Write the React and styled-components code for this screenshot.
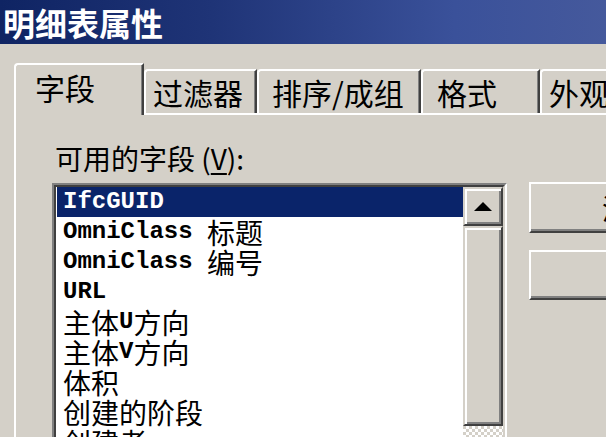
import React from 'react';
import styled, { createGlobalStyle } from 'styled-components';

const GlobalStyle = createGlobalStyle`
  html, body {
    margin: 0;
    padding: 0;
    background: #d4d0c8;
    overflow: hidden;
  }
  body {
    font-family: 'Noto Sans CJK SC', 'Liberation Sans', sans-serif;
  }
`;

const Window = styled.div`
  width: 606px;
  height: 437px;
  overflow: hidden;
  display: flex;
  flex-direction: column;
  background: #d4d0c8;
  color: #000;
`;

const TitleBar = styled.div`
  height: 44px;
  flex: none;
  display: flex;
  align-items: center;
  padding-left: 3px;
  background: linear-gradient(90deg, #0f2463 0%, #1f3477 35%, #3a519a 75%, #45599c 100%);
  color: #fff;
  font-size: 32px;
  font-weight: 700;
  white-space: nowrap;
`;

const Body = styled.div`
  flex: 1;
  display: flex;
  flex-direction: column;
  padding: 19px 0 0 14px;
  min-height: 0;
`;

const TabStrip = styled.div`
  display: flex;
  align-items: flex-end;
  height: 50px;
  flex: none;
`;

const Tab = styled.div`
  flex: none;
  box-sizing: border-box;
  width: ${p => p.$w}px;
  height: ${p => (p.$active ? 52 : 44)}px;
  margin-bottom: ${p => (p.$active ? -2 : 0)}px;
  position: relative;
  z-index: ${p => (p.$active ? 1 : 0)};
  display: flex;
  align-items: center;
  padding-left: ${p => p.$pad}px;
  padding-bottom: ${p => (p.$active ? 6 : 0)}px;
  background: #d4d0c8;
  border-top: 2px solid #fff;
  border-left: 2px solid #fff;
  border-right: 2px solid #404040;
  border-top-left-radius: 4px;
  box-shadow: inset -1px 0 #808080;
  font-size: 30px;
  white-space: nowrap;
`;

const Panel = styled.div`
  flex: 1;
  border-top: 2px solid #fff;
  border-left: 2px solid #fff;
  padding: 26px 0 0 36px;
  min-height: 0;
`;

const FieldLabel = styled.div`
  font-size: 28px;
  line-height: 34px;
  padding-left: 3px;
  margin-bottom: 8px;
  white-space: nowrap;

  u {
    text-decoration: underline;
    text-underline-offset: 3px;
  }
`;

const ContentRow = styled.div`
  display: flex;
  align-items: flex-start;
  gap: 22px;
`;

const ListOuter = styled.div`
  flex: none;
  width: 455px;
  height: 320px;
  box-sizing: border-box;
  border: 2px solid;
  border-color: #808080 #fff #fff #808080;
`;

const ListInner = styled.div`
  height: 100%;
  box-sizing: border-box;
  border: 2px solid;
  border-color: #404040 #d4d0c8 #d4d0c8 #404040;
  display: flex;
  background: #fff;
`;

const Items = styled.div`
  flex: 1;
  display: flex;
  flex-direction: column;
  overflow: hidden;
`;

const Item = styled.div`
  height: 30px;
  line-height: 30px;
  flex: none;
  display: flex;
  align-items: center;
  padding-left: 6px;
  margin-left: 1px;
  white-space: nowrap;
  font-size: 28px;
  background: ${p => (p.$selected ? '#0a246a' : 'transparent')};
  color: ${p => (p.$selected ? '#fff' : '#000')};
`;

const Mono = styled.span`
  font-family: 'Liberation Mono', 'DejaVu Sans Mono', monospace;
  font-size: 24px;
  font-weight: 700;
  white-space: pre;
`;

const ScrollBar = styled.div`
  width: 40px;
  flex: none;
  display: flex;
  flex-direction: column;
`;

const Raised = styled.div`
  flex: none;
  height: ${p => p.$h}px;
  box-sizing: border-box;
  border: 2px solid;
  border-color: #d4d0c8 #404040 #404040 #d4d0c8;
  box-shadow: inset 2px 2px #fff, inset -2px -2px #808080;
  background: #d4d0c8;
  display: flex;
  align-items: center;
  justify-content: center;
`;

const Track = styled.div`
  flex: 1;
  background-color: #d4d0c8;
  background-image: repeating-conic-gradient(#fff 0 25%, #d4d0c8 0 50%);
  background-size: 6px 6px;
`;

const ButtonColumn = styled.div`
  display: flex;
  flex-direction: column;
  gap: 17px;
  margin-top: -1px;
`;

const PushButton = styled.div`
  width: 200px;
  height: ${p => p.$h}px;
  box-sizing: border-box;
  border: 2px solid;
  border-color: #fff #404040 #404040 #fff;
  box-shadow: inset -2px -2px #808080;
  background: #d4d0c8;
  display: flex;
  align-items: center;
  padding-left: ${p => p.$pad}px;
  font-size: 28px;
  white-space: nowrap;
  overflow: hidden;
`;

const tabs = [
  { label: '字段', w: 130, pad: 19, active: true },
  { label: '过滤器', w: 113, pad: 7 },
  { label: '排序/成组', w: 164, pad: 13 },
  { label: '格式', w: 119, pad: 14 },
  { label: '外观', w: 130, pad: 7 },
];

const fields = [
  'IfcGUID',
  'OmniClass 标题',
  'OmniClass 编号',
  'URL',
  '主体U方向',
  '主体V方向',
  '体积',
  '创建的阶段',
  '创建者',
  '制造商',
];

const renderMixed = text =>
  text.split(/([\x20-\x7e]+)/).filter(Boolean).map((part, i) =>
    /^[\x20-\x7e]+$/.test(part) ? <Mono key={i}>{part}</Mono> : <span key={i}>{part}</span>
  );

export default function App() {
  return (
    <Window>
      <GlobalStyle />
      <TitleBar>明细表属性</TitleBar>
      <Body>
        <TabStrip>
          {tabs.map(t => (
            <Tab key={t.label} $w={t.w} $pad={t.pad} $active={t.active}>
              {t.label}
            </Tab>
          ))}
        </TabStrip>
        <Panel>
          <FieldLabel>
            可用的字段 (<u>V</u>):
          </FieldLabel>
          <ContentRow>
            <ListOuter>
              <ListInner>
                <Items>
                  {fields.map((f, i) => (
                    <Item key={f} $selected={i === 0}>
                      {renderMixed(f)}
                    </Item>
                  ))}
                </Items>
                <ScrollBar>
                  <Raised $h={39}>
                    <svg width="18" height="9" viewBox="0 0 18 9">
                      <path d="M9 0 L18 9 L0 9 Z" fill="#000" />
                    </svg>
                  </Raised>
                  <Raised $h={200} />
                  <Track />
                </ScrollBar>
              </ListInner>
            </ListOuter>
            <ButtonColumn>
              <PushButton $h={51} $pad={71}>添加(A) --&gt;</PushButton>
              <PushButton $h={50} $pad={90}>&lt;-- 删除(R)</PushButton>
            </ButtonColumn>
          </ContentRow>
        </Panel>
      </Body>
    </Window>
  );
}
